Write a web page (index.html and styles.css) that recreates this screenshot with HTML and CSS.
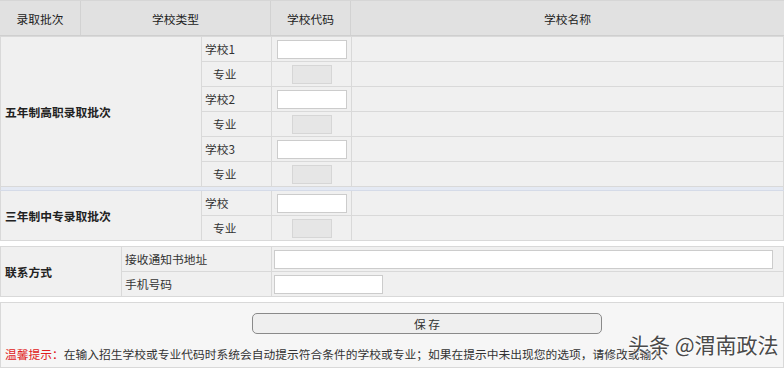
FILE: index.html
```html
<!DOCTYPE html>
<html lang="zh-CN">
<head>
<meta charset="utf-8">
<title>录取批次</title>
<link rel="stylesheet" href="styles.css">
</head>
<body>
<div class="page">
  <div class="head">
    <div class="hcell">录取批次</div>
    <div class="hcell">学校类型</div>
    <div class="hcell">学校代码</div>
    <div class="hcell last">学校名称</div>
  </div>

  <table class="grid">
    <colgroup><col class="c1"><col class="c2"><col class="c3"><col></colgroup>
    <tbody>
      <tr>
        <td class="group" rowspan="6">五年制高职录取批次</td>
        <td class="type">学校1</td>
        <td class="code"><span class="inp"></span></td>
        <td></td>
      </tr>
      <tr><td class="type sub">专业</td><td class="code"><span class="dis"></span></td><td></td></tr>
      <tr><td class="type">学校2</td><td class="code"><span class="inp"></span></td><td></td></tr>
      <tr><td class="type sub">专业</td><td class="code"><span class="dis"></span></td><td></td></tr>
      <tr><td class="type">学校3</td><td class="code"><span class="inp"></span></td><td></td></tr>
      <tr><td class="type sub">专业</td><td class="code"><span class="dis"></span></td><td></td></tr>
      <tr class="sep"><td colspan="4"></td></tr>
      <tr>
        <td class="group" rowspan="2">三年制中专录取批次</td>
        <td class="type">学校</td>
        <td class="code"><span class="inp"></span></td>
        <td></td>
      </tr>
      <tr><td class="type sub">专业</td><td class="code"><span class="dis"></span></td><td></td></tr>
    </tbody>
  </table>

  <table class="grid contact">
    <colgroup><col class="k1"><col class="k2"><col></colgroup>
    <tbody>
      <tr>
        <td class="group" rowspan="2">联系方式</td>
        <td class="type">接收通知书地址</td>
        <td class="field"><span class="inp addr"></span></td>
      </tr>
      <tr>
        <td class="type">手机号码</td>
        <td class="field"><span class="inp phone"></span></td>
      </tr>
    </tbody>
  </table>

  <div class="savebox">
    <div class="btnrow"><span class="btn">保 存</span></div>
    <p class="tip"><span class="warn">温馨提示：</span>在输入招生学校或专业代码时系统会自动提示符合条件的学校或专业；如果在提示中未出现您的选项，请修改或输入</p>
    <span class="mark">头条 @渭南政法</span>
  </div>
</div>
</body>
</html>
```

FILE: styles.css
```css
html, body {
  margin: 0;
  padding: 0;
  background: #ffffff;
}
.page {
  width: 784px;
  font-family: "Noto Sans CJK SC", "Noto Sans", sans-serif;
  font-size: 11.75px;
  color: #333333;
}
.head {
  display: grid;
  grid-template-columns: 81px 190px 80px 1fr;
  height: 34px;
  background: #e1e1e1;
  border-top: 1px solid #d6d6d6;
  border-bottom: 1px solid #cfcfcf;
}
.hcell {
  display: flex;
  align-items: center;
  justify-content: center;
  border-right: 1px solid #d2d2d2;
  color: #222222;
}
.hcell.last { border-right: 0; }

.grid {
  width: 784px;
  border-collapse: collapse;
  table-layout: fixed;
  background: #f0f0f0;
}
.grid td {
  height: 24px;
  padding: 0;
  border: 1px solid #d9d9d9;
  vertical-align: middle;
  line-height: 14px;
}
.c1 { width: 201px; }
.c2 { width: 70px; }
.c3 { width: 80px; }
.k1 { width: 121px; }
.k2 { width: 150px; }

.grid td.group {
  font-weight: bold;
  color: #222222;
  padding-left: 4px;
}
.grid td.type { padding-left: 3px; }
.grid td.type.sub { padding-left: 11px; }
.grid td.code { text-align: center; }
.inp {
  display: inline-block;
  vertical-align: middle;
  width: 68px;
  height: 17px;
  background: #ffffff;
  border: 1px solid #cccccc;
}
.dis {
  display: inline-block;
  vertical-align: middle;
  width: 38px;
  height: 17px;
  background: #e6e6e6;
  border: 1px solid #d6d6d6;
}
.grid tr.sep td {
  height: 3px;
  background: #e4e9f3;
  border-top: 1px solid #d5dbe8;
  border-bottom: 1px solid #d5dbe8;
}
.contact { margin-top: 5px; }
.grid td.field { padding-left: 2px; }
.inp.addr { width: 497px; }
.inp.phone { width: 107px; }

.savebox {
  position: relative;
  margin-top: 5px;
  height: 66px;
  background: #f6f6f6;
  border: 1px solid #d9d9d9;
  box-sizing: border-box;
}
.btnrow {
  display: flex;
  padding: 10px 0 0 251px;
}
.btn {
  display: flex;
  align-items: center;
  justify-content: center;
  width: 348px;
  height: 19px;
  border: 1px solid #8a8a8a;
  border-radius: 5px;
  background: #efefef;
  color: #333333;
}
.tip {
  margin: 11px 0 0 4px;
  white-space: nowrap;
  overflow: hidden;
  color: #333333;
}
.warn { color: #e02020; }
.mark {
  position: absolute;
  left: 627px;
  top: 28px;
  font-size: 21px;
  line-height: 26px;
  color: #4a4a4a;
  text-shadow: 0 0 2px #ffffff, 0 0 2px #ffffff, 0 0 3px #ffffff;
  white-space: nowrap;
}
```
